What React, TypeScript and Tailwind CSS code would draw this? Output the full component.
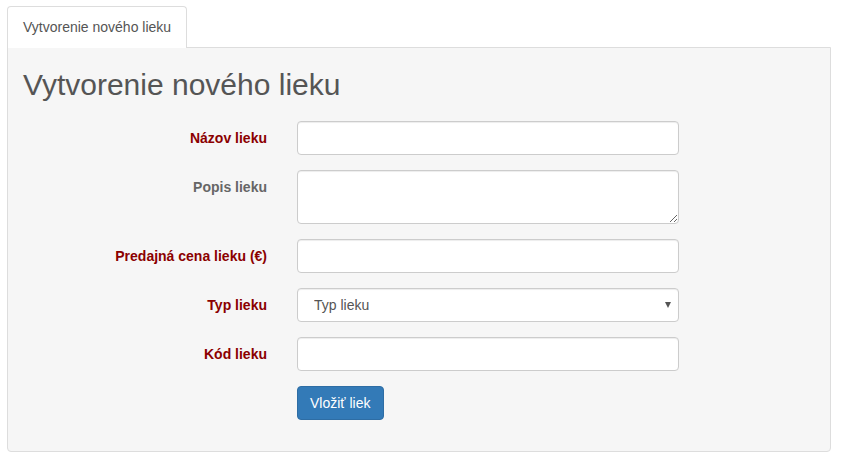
import React from 'react';

const labelCls = "w-[244px] shrink-0 pt-[7px] text-right text-[14px] leading-[20px] font-bold";
const inputCls =
  "w-[382px] h-[34px] rounded-[4px] border border-[#ccc] bg-white px-[12px] text-[14px] text-[#555] shadow-[inset_0_1px_1px_rgba(0,0,0,0.075)] outline-none";

function Row({ label, required = true, children }: { label: string; required?: boolean; children: React.ReactNode }) {
  return (
    <div className="mb-[15px] flex gap-[30px]">
      <label className={`${labelCls} ${required ? 'text-[#8b0000]' : 'text-[#666]'}`}>{label}</label>
      {children}
    </div>
  );
}

export default function App() {
  return (
    <div className="min-h-[464px] bg-white pl-[7px] pr-[15px] pt-[6px] font-['Liberation_Sans',Arial,sans-serif] text-[14px] text-[#333]">
      {/* Tabs */}
      <div className="flex">
        <div className="relative z-10 -mb-px h-[42px] rounded-t-[4px] border border-b-0 border-[#ddd] bg-white px-[15px] leading-[40px] text-[#555]">
          Vytvorenie nového lieku
        </div>
      </div>

      {/* Panel */}
      <div className="rounded-b-[4px] border border-[#ddd] bg-[#f6f6f6] px-[15px] pb-[16px]">
        <h2 className="mt-[20px] mb-[20px] text-[30px] leading-[33px] font-normal text-[#555]">Vytvorenie nového lieku</h2>

        <form onSubmit={e => e.preventDefault()}>
          <Row label="Názov lieku">
            <input type="text" className={inputCls} />
          </Row>
          <Row label="Popis lieku" required={false}>
            <textarea className={`${inputCls} h-[54px] py-[6px]`} />
          </Row>
          <Row label="Predajná cena lieku (€)">
            <input type="text" className={inputCls} />
          </Row>
          <Row label="Typ lieku">
            <div className="relative">
              <select className={`${inputCls} appearance-none pl-[16px]`} defaultValue="">
                <option value="">Typ lieku</option>
              </select>
              <span className="pointer-events-none absolute right-[8px] top-[14px] h-0 w-0 border-x-[3.5px] border-t-[6px] border-x-transparent border-t-[#555]" />
            </div>
          </Row>
          <Row label="Kód lieku">
            <input type="text" className={inputCls} />
          </Row>
          <div className="mb-[15px] flex gap-[30px]">
            <div className="w-[244px] shrink-0" />
            <button
              type="submit"
              className="h-[34px] rounded-[4px] border border-[#2e6da4] bg-[#337ab7] px-[12px] text-[14px] text-white"
            >
              Vložiť liek
            </button>
          </div>
        </form>
      </div>
    </div>
  );
}
